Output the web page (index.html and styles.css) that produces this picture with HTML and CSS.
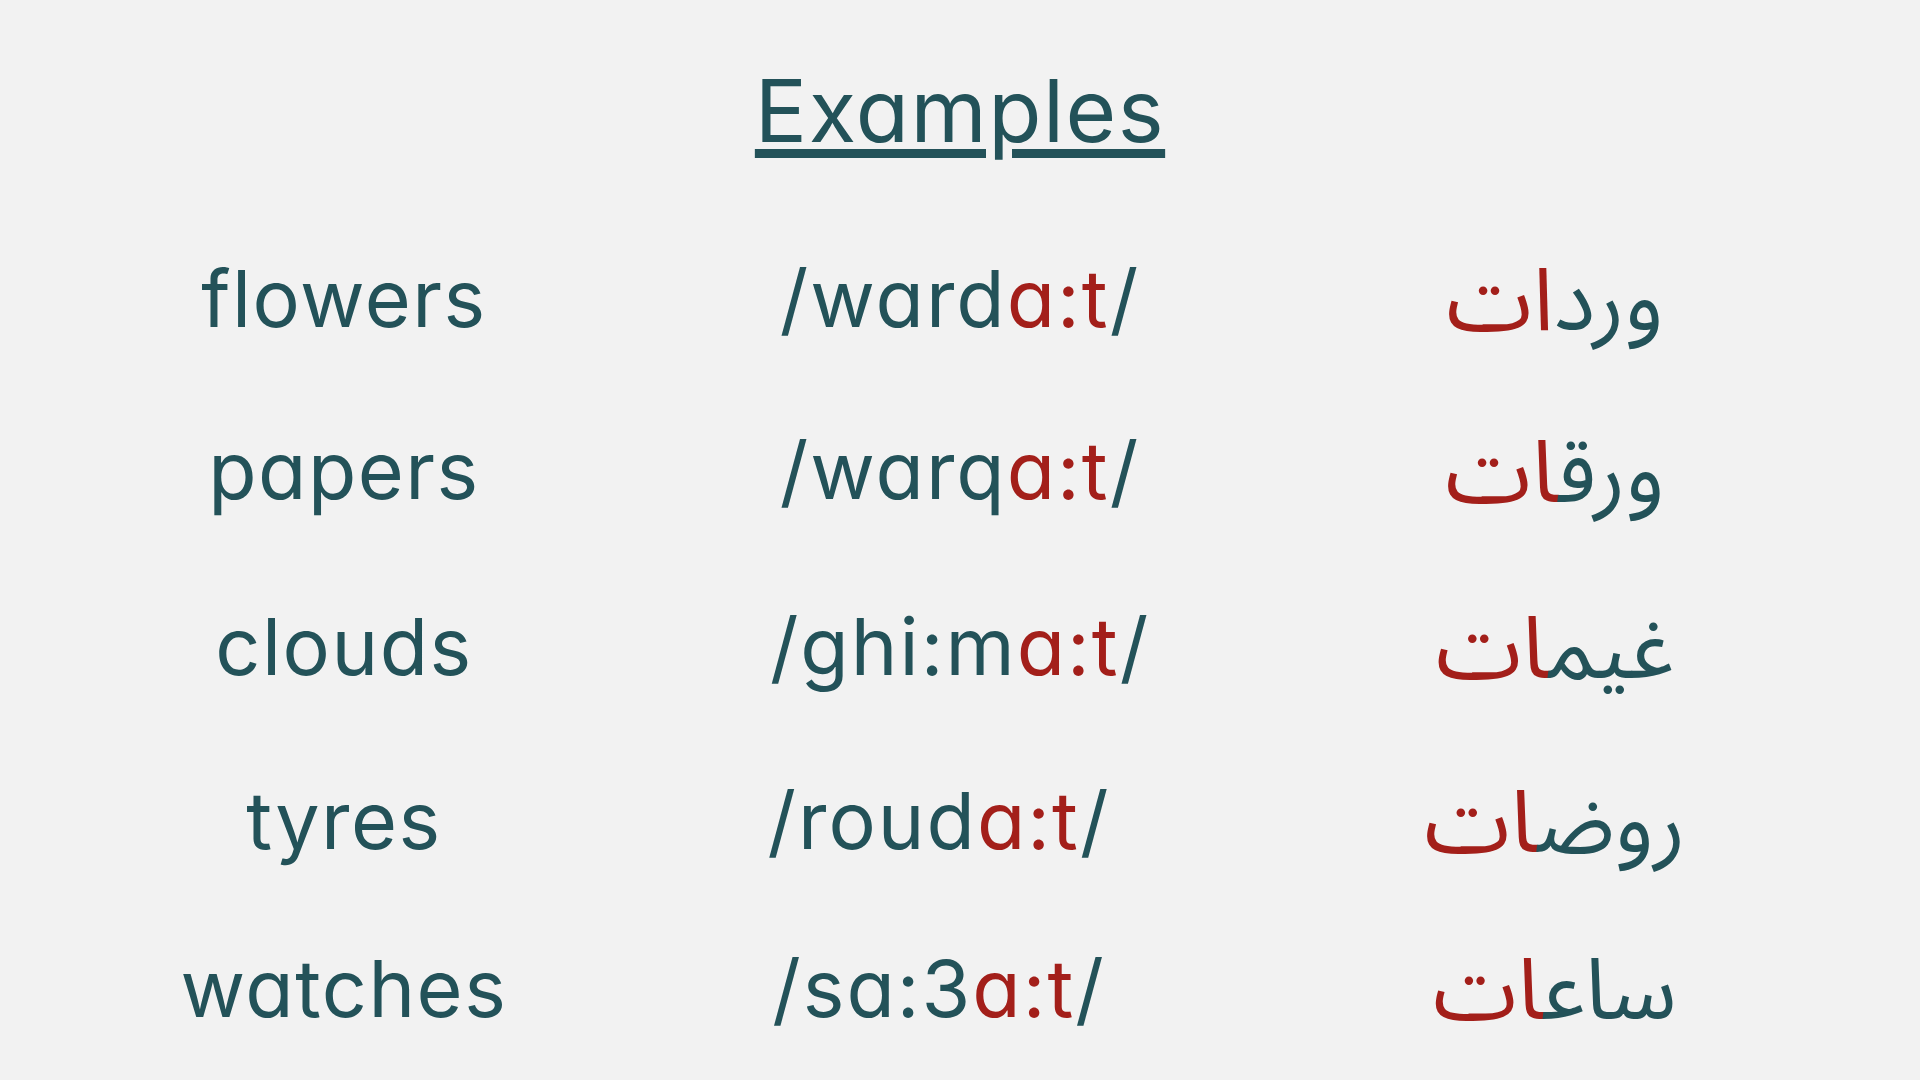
FILE: index.html
```html
<!DOCTYPE html>
<html lang="en">
<head>
<meta charset="utf-8">
<title>Examples</title>
<link rel="stylesheet" href="styles.css">
</head>
<body>
<main class="slide">
  <h1 class="title">Examples</h1>
  <div class="table">
    <div class="row r1">
      <div class="cell en">flowers</div>
      <div class="cell ph">/ward<span class="hl">a:t</span>/</div>
      <div class="cell ar" dir="rtl" lang="ar">ورد<span class="hl">ات</span></div>
    </div>
    <div class="row r2">
      <div class="cell en">papers</div>
      <div class="cell ph">/warq<span class="hl">a:t</span>/</div>
      <div class="cell ar" dir="rtl" lang="ar">ورق<span class="hl">ات</span></div>
    </div>
    <div class="row r3">
      <div class="cell en">clouds</div>
      <div class="cell ph">/ghi:m<span class="hl">a:t</span>/</div>
      <div class="cell ar" dir="rtl" lang="ar">غيم<span class="hl">ات</span></div>
    </div>
    <div class="row r4">
      <div class="cell en">tyres</div>
      <div class="cell ph ph-left">/roud<span class="hl">a:t</span>/</div>
      <div class="cell ar" dir="rtl" lang="ar">روض<span class="hl">ات</span></div>
    </div>
    <div class="row r5">
      <div class="cell en">watches</div>
      <div class="cell ph ph-left">/sa:3<span class="hl">a:t</span>/</div>
      <div class="cell ar ar-last" dir="rtl" lang="ar">ساع<span class="hl">ات</span></div>
    </div>
  </div>
</main>
</body>
</html>
```

FILE: styles.css
```css
html, body {
  margin: 0;
  padding: 0;
  background: #f2f2f2;
}

.slide {
  width: 1920px;
  height: 1080px;
  display: flex;
  flex-direction: column;
  color: #235259;
  font-family: "Inter", "Noto Sans", sans-serif;
  font-feature-settings: "cv11" 1;
}

.title {
  margin: 0;
  padding-top: 61px;
  font-size: 87px;
  font-weight: 400;
  line-height: 100px;
  text-align: center;
  text-decoration: underline;
  text-decoration-thickness: 9px;
  text-underline-offset: 7px;
  letter-spacing: 1.5px;
}

.table {
  flex: 1;
  display: flex;
  flex-direction: column;
  padding-top: 87px;
}

.row {
  display: grid;
  grid-template-columns: 688px 544px 646px;
  align-items: start;
}

.r1 { height: 172px; }
.r2 { height: 176px; }
.r3 { height: 174px; }
.r4 { height: 168px; }
.r5 { flex: 1; }

.cell {
  text-align: center;
  font-size: 79px;
  line-height: 100px;
  white-space: nowrap;
}

.en {
  letter-spacing: 1.5px;
}

.ph {
  letter-spacing: 2px;
}

.ph-left {
  padding-right: 42px;
}

.ar {
  font-family: "Noto Sans Arabic", "Noto Naskh Arabic", "DejaVu Sans", sans-serif;
  font-size: 87px;
  padding-top: 4px;
}

.ar-last {
  font-size: 85px;
}

.hl {
  color: #a31f1a;
}
```
